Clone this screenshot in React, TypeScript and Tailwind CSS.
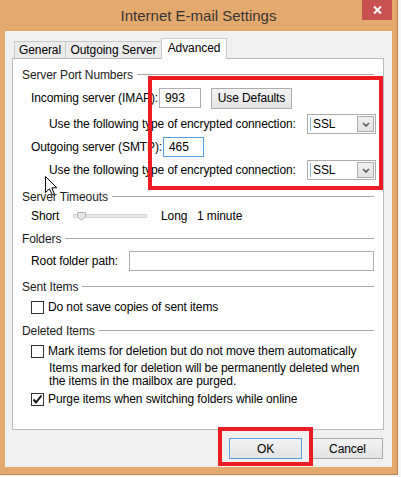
import React from 'react';

function Section({ title }: { title: string }) {
    return (
        <div className="flex items-center h-[17px] gap-[4px] text-[#1a1a1a]">
            <span className="whitespace-nowrap">{title}</span>
            <div className="flex-1 h-px bg-[#a9a9a9]" />
        </div>
    );
}

function Button({ label, isDefault = false, w }: { label: string; isDefault?: boolean; w: string }) {
    return (
        <div
            className={
                'h-[21px] flex items-center justify-center bg-linear-to-b from-[#f3f3f3] to-[#e3e3e3] border ' +
                w +
                (isDefault ? ' border-[#5aa0e2]' : ' border-[#acacac]')
            }
        >
            {label}
        </div>
    );
}

function Checkbox({ checked = false }: { checked?: boolean }) {
    return (
        <div className="w-[13px] h-[13px] border border-[#333] bg-white flex items-center justify-center shrink-0">
            {checked && (
                <svg width="11" height="11" viewBox="0 0 11 11">
                    <path d="M1.5 5.5 L4 8.5 L9.5 1.5" fill="none" stroke="#111" strokeWidth="2" />
                </svg>
            )}
        </div>
    );
}

function Select() {
    return (
        <div className="w-[69px] h-[20px] shrink-0 border border-[#acacac] bg-white flex items-center p-px">
            <div className="w-px h-[14px] bg-[#8ab6e4] ml-[1px]" />
            <span className="flex-1 pl-[2px]">SSL</span>
            <div className="w-[17px] h-full border border-[#acacac] bg-linear-to-b from-[#f0f0f0] to-[#e2e2e2] flex items-center justify-center">
                <svg width="8" height="5" viewBox="0 0 8 5">
                    <path d="M1 1 L4 4 L7 1" fill="none" stroke="#555" strokeWidth="1.5" />
                </svg>
            </div>
        </div>
    );
}

export default function App() {
    return (
        <div className="relative w-[401px] h-[477px] bg-[#f6f6f6] overflow-hidden font-['Liberation_Sans',Arial,sans-serif] text-[12px] leading-none tracking-[-0.1px] text-black">
            <div className="flex flex-col w-[398px] h-[475px] bg-[#e4a96c] border-r border-b border-[#c08550]">
                {/* Title bar */}
                <div className="relative h-[31px] shrink-0 flex items-center justify-center text-[15px] tracking-normal text-[#353535]">
                    Internet E-mail Settings
                    <div className="absolute right-[5px] top-0 w-[30px] h-[20px] bg-[#c75050] flex items-center justify-center">
                        <svg width="9" height="8" viewBox="0 0 9 8">
                            <path d="M1 0.5 L8 7.5 M8 0.5 L1 7.5" stroke="#fff" strokeWidth="2" />
                        </svg>
                    </div>
                </div>

                {/* Client area */}
                <div className="ml-[5px] w-[387px] h-[436px] bg-[#f0f0f0] flex flex-col pt-[7px] pl-[7px] pr-[8px]">
                    {/* Tabs */}
                    <div className="h-[20px] flex items-end pl-[2px]">
                        <div className="w-[52px] h-[17px] flex items-center justify-center border border-b-0 border-[#c9c9c9] bg-[#ececec]">
                            General
                        </div>
                        <div className="w-[96px] h-[17px] flex items-center justify-center border-t border-r border-[#c9c9c9] bg-[#ececec]">
                            Outgoing Server
                        </div>
                        <div className="relative z-10 -mb-px -ml-px w-[66px] h-[21px] flex items-center justify-center border border-b-0 border-[#c9c9c9] bg-white pb-[2px]">
                            Advanced
                        </div>
                    </div>

                    {/* Tab panel */}
                    <div className="h-[372px] border border-[#b9b9b9] bg-white flex flex-col px-[9px]">
                        <div className="mt-[7px]">
                            <Section title="Server Port Numbers" />
                        </div>
                        <div className="mt-[5px] h-[20px] flex items-center pl-[9px]">
                            <span className="w-[128px] shrink-0 whitespace-nowrap">Incoming server (IMAP):</span>
                            <div className="w-[42px] h-[20px] shrink-0 border border-[#abadb3] flex items-center pl-[5px]">993</div>
                            <div className="ml-[10px]">
                                <Button label="Use Defaults" w="w-[81px]" />
                            </div>
                        </div>
                        <div className="mt-[6px] h-[20px] flex items-center pl-[27px]">
                            <span className="w-[258px] shrink-0 whitespace-nowrap">Use the following type of encrypted connection:</span>
                            <Select />
                        </div>
                        <div className="mt-[3px] h-[20px] flex items-center pl-[9px]">
                            <span className="w-[132px] shrink-0 whitespace-nowrap">Outgoing server (SMTP):</span>
                            <div className="w-[41px] h-[20px] shrink-0 border border-[#569de5] flex items-center pl-[5px]">465</div>
                        </div>
                        <div className="mt-[3px] h-[20px] flex items-center pl-[27px]">
                            <span className="w-[258px] shrink-0 whitespace-nowrap">Use the following type of encrypted connection:</span>
                            <Select />
                        </div>

                        <div className="mt-[8px]">
                            <Section title="Server Timeouts" />
                        </div>
                        <div className="mt-[3px] h-[16px] flex items-center pl-[9px]">
                            <span className="w-[42px] shrink-0">Short</span>
                            <div className="relative w-[74px] h-[4px] shrink-0 bg-[#e7eaea] border border-[#d6d6d6]">
                                <svg className="absolute left-[3px] -top-[3px]" width="9" height="9" viewBox="0 0 9 9">
                                    <path d="M0.5 0.5 H8.5 V5 L4.5 8.5 L0.5 5 Z" fill="#e6e6e6" stroke="#b4b4b4" />
                                </svg>
                            </div>
                            <span className="ml-[14px] w-[36px] shrink-0">Long</span>
                            <span className="whitespace-nowrap">1 minute</span>
                        </div>

                        <div className="mt-[6px]">
                            <Section title="Folders" />
                        </div>
                        <div className="mt-[4px] h-[20px] flex items-center pl-[9px]">
                            <span className="w-[98px] shrink-0 whitespace-nowrap">Root folder path:</span>
                            <div className="w-[246px] h-[20px] border border-[#abadb3]" />
                        </div>

                        <div className="mt-[7px]">
                            <Section title="Sent Items" />
                        </div>
                        <div className="mt-[4px] h-[16px] flex items-center gap-[4px] pl-[9px]">
                            <Checkbox />
                            <span className="whitespace-nowrap">Do not save copies of sent items</span>
                        </div>

                        <div className="mt-[7px]">
                            <Section title="Deleted Items" />
                        </div>
                        <div className="mt-[4px] h-[16px] flex items-center gap-[4px] pl-[9px]">
                            <Checkbox />
                            <span className="whitespace-nowrap">Mark items for deletion but do not move them automatically</span>
                        </div>
                        <div className="mt-[3px] pl-[27px] leading-[13px] whitespace-nowrap">
                            Items marked for deletion will be permanently deleted when
                            <br />
                            the items in the mailbox are purged.
                        </div>
                        <div className="mt-[3px] h-[16px] flex items-center gap-[4px] pl-[9px]">
                            <Checkbox checked />
                            <span className="whitespace-nowrap">Purge items when switching folders while online</span>
                        </div>
                    </div>

                    {/* Dialog buttons */}
                    <div className="mt-[8px] flex justify-end gap-[10px] pr-[1px]">
                        <Button label="OK" isDefault w="w-[73px]" />
                        <Button label="Cancel" w="w-[71px]" />
                    </div>
                </div>
            </div>

            {/* Red annotation boxes */}
            <div className="absolute left-[148px] top-[76px] w-[235px] h-[114px] border-[4px] border-[#ed1c24]" />
            <div className="absolute left-[218px] top-[427px] w-[95px] h-[39px] border-[4px] border-[#ed1c24]" />

            {/* Mouse pointer */}
            <svg className="absolute left-[45px] top-[176px]" width="13" height="20" viewBox="0 0 13 20">
                <path d="M0.5 0.5 V16.5 L4.5 12.8 L7.2 18.8 L9.4 17.8 L6.8 11.8 L11.8 11.8 Z" fill="#fff" stroke="#000" strokeWidth="1" />
            </svg>
        </div>
    );
}
